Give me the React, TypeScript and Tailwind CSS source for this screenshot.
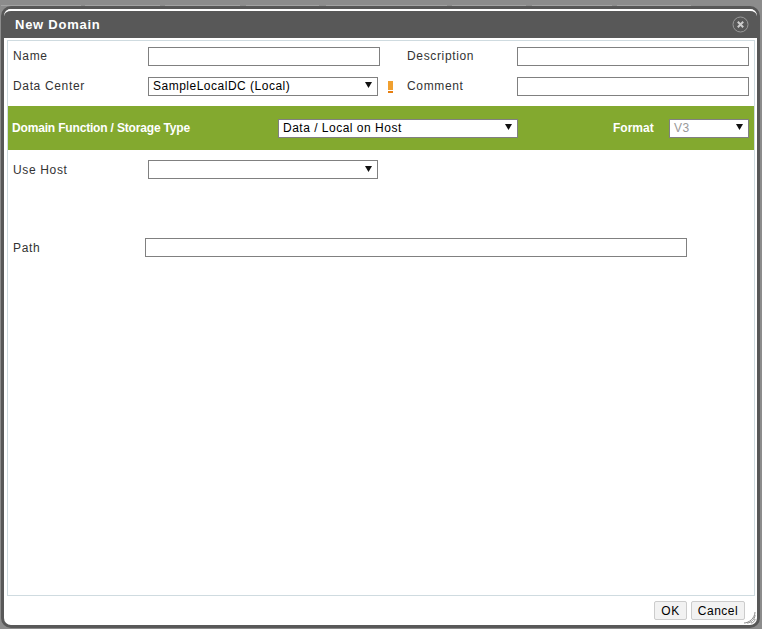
const labelCls = "font-['Liberation_Sans',sans-serif] text-xs text-[#333] tracking-[0.65px]";
const inputCls = "h-[19px] border border-[#808080] bg-white";

// faint edges of the tabs behind the dialog
const tabEdges = ["w-[80px]", "ml-[4px] w-[75px]", "ml-[5px] w-[75px]", "ml-[6px] w-[73px]", "ml-[7px] w-[121px]", "ml-[5px] w-[74px]", "ml-[6px] w-[80px]", "ml-[5px] w-[74px]"];

function Select({ value, className, muted }: { value?: string; className: string; muted?: boolean }) {
  return (
    <div className={`flex h-[19px] items-center justify-between border border-[#808080] bg-white pl-1 pr-[5px] font-['Liberation_Sans',sans-serif] text-xs font-normal tracking-[0.5px] ${className}`}>
      <span className={muted ? "text-[#999]" : "text-black"}>{value}</span>
      <svg width="7" height="6" viewBox="0 0 7 6" className="mb-[2px]">
        <path d="M0 0h7L3.5 6z" fill="#111" />
      </svg>
    </div>
  );
}

function Resizer() {
  return (
    <svg width="13" height="13" viewBox="0 0 13 13" className="absolute bottom-[1px] right-[1px]" fill="none" stroke="#8a8a8a">
      <path d="M1 12C6 12 12 7 12 1" />
      <path d="M4 12C8 12 12 8 12 4" />
      <path d="M8 12C10 12 12 10 12 8" />
    </svg>
  );
}

export default function App() {
  return (
    <div className="flex h-[629px] w-[762px] flex-col overflow-hidden bg-[#8c8c8c] pt-[5px] pb-[1px] pl-[1px] pr-[2px] font-['Liberation_Sans',sans-serif]">
      <div className="flex h-[1px] shrink-0">
        {tabEdges.map((cls) => (
          <div key={cls} className={`h-[1px] bg-[#a3a3a3] ${cls}`} />
        ))}
      </div>
      <div className="relative flex min-h-0 flex-1 flex-col rounded-[10px] border-[3px] border-[#585858] bg-white">
        <div className="flex h-[29px] items-center justify-between rounded-t-[7px] border-t-2 border-white bg-[#585858] pl-[11px] pr-[8px]">
          <span className="text-[13px] font-bold tracking-[0.75px] text-white">New Domain</span>
          <svg width="17" height="17" viewBox="0 0 17 17" fill="none">
            <circle cx="8.5" cy="8.5" r="7.5" stroke="#999" />
            <path d="M5.8 5.8l5.4 5.4M11.2 5.8l-5.4 5.4" stroke="#ccc" strokeWidth="2" />
          </svg>
        </div>
        <div className="ml-[3px] mr-[2px] mt-[2px] flex h-[556px] flex-col border border-[#cfdbe0]">
          <div className="flex h-[30px] items-center pl-[5px]">
            <span className={`w-[135px] ${labelCls}`}>Name</span>
            <div className={`w-[232px] ${inputCls}`} />
            <span className={`ml-[27px] w-[110px] ${labelCls}`}>Description</span>
            <div className={`w-[232px] ${inputCls}`} />
          </div>
          <div className="flex h-[30px] items-center pl-[5px]">
            <span className={`w-[135px] ${labelCls}`}>Data Center</span>
            <Select value="SampleLocalDC (Local)" className="w-[230px]" />
            <svg width="5" height="12" viewBox="0 0 5 12" className="ml-[10px] mt-[2px]">
              <rect x="0" y="0" width="5" height="9" fill="#f0a030" />
              <rect x="0" y="10" width="5" height="2" fill="#e67e10" />
            </svg>
            <span className={`ml-[14px] w-[110px] ${labelCls}`}>Comment</span>
            <div className={`w-[232px] ${inputCls}`} />
          </div>
          <div className="mt-[5px] flex h-[44px] items-center bg-[#83a92f] pl-[4px] text-xs font-bold text-white">
            <span className="w-[266px] tracking-[-0.17px]">Domain Function / Storage Type</span>
            <Select value="Data / Local on Host" className="w-[240px]" />
            <span className="ml-[95px] w-[56px]">Format</span>
            <Select value="V3" muted className="w-[80px]" />
          </div>
          <div className="mt-[10px] flex items-center pl-[5px]">
            <span className={`w-[135px] ${labelCls}`}>Use Host</span>
            <Select className="w-[230px]" />
          </div>
          <div className="mt-[59px] flex items-center pl-[5px]">
            <span className={`w-[132px] ${labelCls}`}>Path</span>
            <div className={`w-[542px] ${inputCls}`} />
          </div>
        </div>
        <div className="mt-[5px] flex justify-end gap-[4px] pr-[12px] text-xs tracking-[0.5px] text-black">
          <button className="h-[19px] w-[33px] rounded-[2px] border border-[#ccc] bg-[#f2f2f2]">OK</button>
          <button className="h-[19px] w-[54px] rounded-[2px] border border-[#ccc] bg-[#f2f2f2]">Cancel</button>
        </div>
        <Resizer />
      </div>
    </div>
  );
}
